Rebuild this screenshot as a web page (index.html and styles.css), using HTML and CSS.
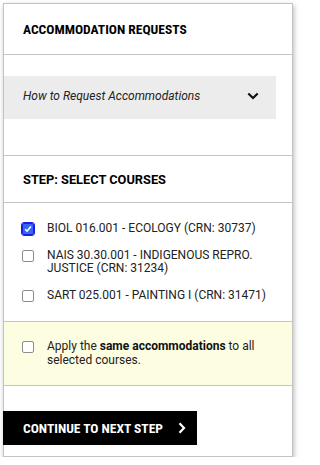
FILE: index.html
```html
<!DOCTYPE html>
<html lang="en">
<head>
<meta charset="utf-8">
<title>Accommodation Requests</title>
<link rel="stylesheet" href="styles.css">
</head>
<body>
<div class="card">
  <header class="card-head">
    <h1 class="title">ACCOMMODATION REQUESTS</h1>
  </header>
  <section class="acc-wrap">
    <button class="acc" type="button">
      <span class="acc-label">How to Request Accommodations</span>
      <svg class="acc-chev" width="12" height="8" viewBox="0 0 12 8" aria-hidden="true"><path d="M1.3 1.5 L6 6 L10.7 1.5" fill="none" stroke="#111" stroke-width="2.2"/></svg>
    </button>
  </section>
  <section class="step-head">
    <h2 class="step-title">STEP: SELECT COURSES</h2>
  </section>
  <section class="courses">
    <ul class="course-list">
      <li class="course">
        <span class="box checked"><svg width="10" height="10" viewBox="0 0 10 10" aria-hidden="true"><path d="M2.2 5.2 L4.1 7.1 L7.9 2.6" fill="none" stroke="#fff" stroke-width="1.6"/></svg></span>
        <span class="course-text">BIOL 016.001 - ECOLOGY (CRN: 30737)</span>
      </li>
      <li class="course">
        <span class="box"></span>
        <span class="course-text">NAIS 30.30.001 - INDIGENOUS REPRO. JUSTICE (CRN: 31234)</span>
      </li>
      <li class="course">
        <span class="box"></span>
        <span class="course-text">SART 025.001 - PAINTING I (CRN: 31471)</span>
      </li>
    </ul>
  </section>
  <section class="apply">
    <span class="box"></span>
    <p class="apply-text">Apply the <strong>same accommodations</strong> to all selected courses.</p>
  </section>
  <div class="actions">
    <button class="continue" type="button">
      <span>CONTINUE TO NEXT STEP</span>
      <svg class="cont-chev" width="8" height="12" viewBox="0 0 8 12" aria-hidden="true"><path d="M1.5 1.3 L6 6 L1.5 10.7" fill="none" stroke="#fff" stroke-width="2.2"/></svg>
    </button>
  </div>
</div>
</body>
</html>
```

FILE: styles.css
```css
* { box-sizing: border-box; }

html, body { background: #fff; }

body {
  margin: 0;
  padding: 3px 0 0 3px;
  font-family: Roboto, "Liberation Sans", sans-serif;
  color: #111;
}

.card {
  width: 290px;
  border: 1px solid #c4c4c4;
  background: #fff;
  box-shadow: 1px 2px 5px rgba(0, 0, 0, 0.28);
}

.card-head {
  height: 51px;
  border-bottom: 1px solid #c4c4c4;
  display: flex;
  align-items: center;
  padding-left: 19px;
}

.title {
  margin: 0;
  font-family: "Roboto Condensed", Roboto, sans-serif;
  font-weight: 700;
  font-size: 13.5px;
  color: #000;
}

.acc-wrap {
  height: 101px;
  border-bottom: 1px solid #c4c4c4;
  padding: 21px 16px 0 0;
}

.acc {
  width: 100%;
  height: 43px;
  border: 0;
  margin: 0;
  background: #ececec;
  display: flex;
  align-items: center;
  justify-content: space-between;
  padding: 0 17px 4px 19px;
  font: inherit;
  cursor: pointer;
}

.acc-label {
  font-style: italic;
  font-size: 12px;
  color: #222;
}

.step-head {
  height: 47px;
  border-bottom: 1px solid #c4c4c4;
  display: flex;
  align-items: center;
  padding-left: 19px;
}

.step-title {
  margin: 0;
  font-weight: 700;
  font-size: 12.8px;
  color: #000;
}

.courses {
  border-bottom: 1px solid #c4c4c4;
  padding: 19px 6px 19px 18px;
}

.course-list {
  list-style: none;
  margin: 0;
  padding: 0;
  display: flex;
  flex-direction: column;
  gap: 14px;
}

.course {
  display: flex;
  align-items: flex-start;
}

.course-text {
  font-size: 12px;
  line-height: 13px;
  color: #222;
}

.box {
  flex: none;
  width: 12px;
  height: 12px;
  margin: 1px 13px 0 0;
  border: 1px solid #8d8d8d;
  border-radius: 2px;
  background: #fff;
  display: flex;
  align-items: center;
  justify-content: center;
}

.box.checked {
  background: #3467f6;
  border-color: #1d1de6;
  outline: 1px solid #1d1de6;
}

.apply {
  height: 64px;
  border-bottom: 1px solid #c4c4c4;
  background: #fdfde1;
  display: flex;
  align-items: flex-start;
  padding: 17px 20px 0 18px;
}

.apply .box { margin-top: 2px; }

.apply-text {
  margin: 0;
  font-size: 12px;
  line-height: 14px;
  color: #222;
}

.apply-text strong { font-weight: 700; color: #111; }

.actions {
  padding: 25px 0 11px 0;
}

.continue {
  margin: 0 0 0 -1px;
  width: 194px;
  height: 34px;
  border: 0;
  background: #000;
  color: #fff;
  display: flex;
  align-items: center;
  justify-content: space-between;
  padding: 0 11px 0 20px;
  font-family: "Roboto Condensed", Roboto, sans-serif;
  font-weight: 700;
  font-size: 13.5px;
  cursor: pointer;
}
```
